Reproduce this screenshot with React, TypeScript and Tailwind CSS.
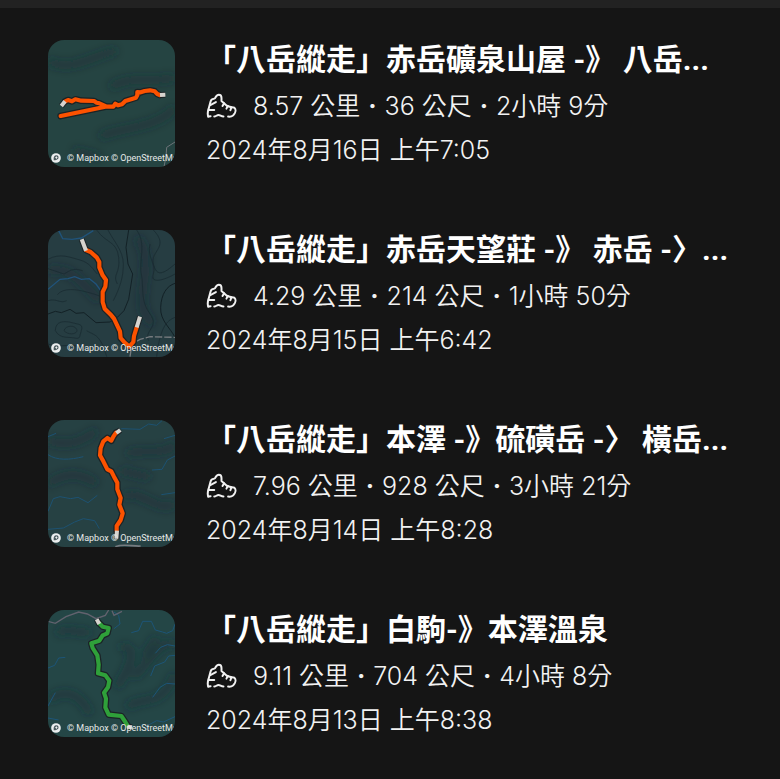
import { Fragment, type ReactNode } from "react";

type Activity = {
  id: string;
  title: string;
  stats: string[];
  date: string;
  map: ReactNode;
};

type TrackProps = { d: string; color: string; ends: string[] };

function Track({ d, color, ends }: TrackProps) {
  return (
    <g fill="none" strokeLinecap="round" strokeLinejoin="round">
      <path d={d} stroke="#1b2326" strokeWidth="20" />
      {ends.map((e) => (
        <path key={e} d={e} stroke="#1b2326" strokeWidth="18" strokeLinecap="butt" />
      ))}
      <path d={d} stroke={color} strokeWidth="12.5" />
      {ends.map((e) => (
        <path key={e} d={e} stroke="#d6d3ce" strokeWidth="12" strokeLinecap="butt" />
      ))}
    </g>
  );
}

type TerrainProps = { id: string; base: string; shades: string[]; children: ReactNode };

function Terrain({ id, base, shades, children }: TerrainProps) {
  return (
    <svg viewBox="24 28 381 381" className="block size-full" role="img" aria-label="路線地圖">
      <defs>
        <filter id={id} x="-30%" y="-30%" width="160%" height="160%">
          <feGaussianBlur stdDeviation="12" />
        </filter>
      </defs>
      <rect x="24" y="28" width="381" height="381" fill={base} />
      <g filter={`url(#${id})`} fill="none" stroke="#162b2f" strokeOpacity="0.4" strokeWidth="24">
        {shades.map((s) => (
          <path key={s} d={s} />
        ))}
      </g>
      {children}
    </svg>
  );
}

const activities: Activity[] = [
  {
    id: "a",
    title: "「八岳縱走」赤岳礦泉山屋 -》 八岳...",
    stats: ["8.57 公里", "36 公尺", "2小時 9分"],
    date: "2024年8月16日 上午7:05",
    map: (
      <Terrain
        id="shade-a"
        base="#254442"
        shades={[
          "M24 90C90 130 170 70 230 60",
          "M210 170C280 130 330 160 405 140",
          "M180 320C220 290 350 300 405 230",
          "M100 360L180 380",
        ]}
      >
        <path d="M405 334L380 350L378 378L372 408" fill="none" stroke="#6d7479" strokeWidth="3" />
        <Track
          color="#fc5200"
          d="M62 256L196 228M76 212L84 208L96 212L106 206L124 210L162 211L170 216L178 218L200 228L220 228L226 219L234 224L246 221L256 211L288 201L292 193L292 184L302 185L314 181L330 179L344 182L352 190L359 193"
          ends={["M64 226L75 212", "M360 193L376 192"]}
        />
      </Terrain>
    ),
  },
  {
    id: "b",
    title: "「八岳縱走」赤岳天望莊 -》 赤岳 -〉...",
    stats: ["4.29 公里", "214 公尺", "1小時 50分"],
    date: "2024年8月15日 上午6:42",
    map: (
      <Terrain
        id="shade-b"
        base="#263d42"
        shades={["M24 150C90 140 110 170 180 240", "M290 50C360 130 260 250 340 310"]}
      >
        <g fill="none" stroke="#1b2d32" strokeWidth="2.5">
          <path d="M24 116C60 96 90 110 120 118S160 148 172 160" />
          <path d="M24 144L72 160C88 152 96 140 128 150" />
          <path d="M52 222C70 200 110 206 140 214S174 224 186 230" />
          <path d="M24 240C50 232 60 250 80 240" />
          <path d="M46 330C46 300 74 300 96 306S130 310 124 330S120 356 104 352S60 356 46 330Z" />
          <path d="M72 330C76 314 104 312 110 326S86 346 72 330Z" />
          <path d="M24 370C60 384 80 366 130 380" />
          <path d="M170 28C200 70 230 60 236 110S216 160 232 190" />
          <path d="M204 28C220 60 250 90 250 130S240 200 220 240" />
          <path d="M290 28C320 70 296 120 304 160S300 240 330 280S310 330 326 360" />
          <path d="M340 28C390 80 330 90 340 130S370 160 405 130" />
          <path d="M405 160C370 180 330 190 340 160S320 110 330 70" />
          <path d="M405 290C380 300 360 320 350 408" />
          <path d="M140 330C160 344 180 336 200 408" />
        </g>
        <g fill="none" stroke="#132126" strokeWidth="3">
          <path d="M24 280L46 272L64 276L90 266L108 278L132 276L168 306L210 304L232 290L252 270L266 236L278 160L264 130L258 80L266 28" />
          <path d="M405 188C380 196 364 220 362 260S390 320 405 350" />
        </g>
        <g fill="none" stroke="#20537a" strokeWidth="4">
          <path d="M56 30L68 54L96 56L124 52L160 30" />
          <path d="M24 206L60 176L84 174L104 168L124 176L148 174L168 190L184 212" />
        </g>
        <path d="M270 408L276 370L300 356L330 348L405 350" fill="none" stroke="#767b7e" strokeWidth="4" strokeDasharray="22 6" />
        <Track
          color="#fc5200"
          d="M138 88L152 94L170 110L178 124L178 140L188 164L198 178L196 198L188 214L188 244L194 264L214 284L222 294L240 332L242 352L254 366L268 378L280 364L282 346L290 320"
          ends={["M125 56L138 90", "M290 320L300 288"]}
        />
      </Terrain>
    ),
  },
  {
    id: "c",
    title: "「八岳縱走」本澤 -》硫磺岳 -〉 橫岳...",
    stats: ["7.96 公里", "928 公尺", "3小時 21分"],
    date: "2024年8月14日 上午8:28",
    map: (
      <Terrain
        id="shade-c"
        base="#264143"
        shades={[
          "M24 90C90 110 130 90 170 60",
          "M24 220C80 180 130 190 170 220",
          "M260 130C310 110 370 140 405 100",
          "M250 260C300 230 350 310 405 280",
          "M240 180L330 200",
        ]}
      >
        <g fill="none" stroke="#1d5272" strokeWidth="3">
          <path d="M24 78L48 68" />
          <path d="M24 132C50 150 90 148 130 138" />
          <path d="M244 54L300 56L326 40L350 44L366 30" />
          <path d="M336 178L366 176L382 148L405 136" />
          <path d="M364 252L405 246M372 84L405 74" />
          <path d="M24 302L40 264L60 258L92 264L114 260L144 276L172 254" />
          <path d="M24 356L70 352L104 334L130 324L164 330L178 354" />
        </g>
        <path d="M226 408C250 398 280 408 302 406" fill="none" stroke="#777b80" strokeWidth="5" />
        <Track
          color="#fc5200"
          d="M228 66L220 78L214 90L202 82L190 92L182 112L180 134L190 152L202 176L214 182L222 198L232 216L232 236L242 262L238 282L248 308L242 328L230 346L230 360"
          ends={["M229 67L241 58", "M231 360L229 384"]}
        />
      </Terrain>
    ),
  },
  {
    id: "d",
    title: "「八岳縱走」白駒-》本澤溫泉",
    stats: ["9.11 公里", "704 公尺", "4小時 8分"],
    date: "2024年8月13日 上午8:38",
    map: (
      <Terrain
        id="shade-d"
        base="#244646"
        shades={[
          "M50 100C90 70 120 110 150 90",
          "M240 140C300 130 270 200 230 260",
          "M405 130C350 120 320 200 280 230",
          "M24 300C90 250 130 300 150 340",
          "M260 320C310 280 360 330 405 220",
          "M310 170L350 110",
        ]}
      >
        <g fill="none" stroke="#1d5578" strokeWidth="3">
          <path d="M274 96L296 90L308 62L334 62L346 88L368 94L380 98L398 90L405 70" />
          <path d="M346 158L362 140L382 132L405 136M332 226L344 196L374 184L386 166L405 164" />
          <path d="M338 290L360 260L380 248L405 250" />
          <path d="M24 202L44 194L56 172L76 170M24 316L46 276" />
          <path d="M24 352L56 358M320 376L350 360L370 364L405 348" />
          <path d="M222 84L240 70L236 44L222 34" />
        </g>
        <path d="M24 62L46 68L78 48L116 34L142 40L168 54L196 44L206 28M216 30L222 44L246 32" fill="none" stroke="#62626e" strokeWidth="4" />
        <Track
          color="#2fa03a"
          d="M178 68L188 78L206 82L202 98L188 104L178 120L154 128L158 142L172 164L176 192L174 218L196 224L208 240L204 260L192 276L198 294L196 320L206 342L244 346L256 364L266 380"
          ends={["M170 56L178 70", "M262 378L276 380"]}
        />
      </Terrain>
    ),
  },
];

function BootIcon() {
  return (
    <svg
      viewBox="20 20 94 78"
      className="h-[26px] w-[31px] shrink-0"
      fill="none"
      stroke="currentColor"
      strokeWidth="6"
      strokeLinecap="round"
      strokeLinejoin="round"
      aria-hidden="true"
    >
      <path d="M27 91C24 84 25 76 28 67L34 45C35 41 37 39 41 38L47 36C51 28 54 25 59 25C65 25 67 29 67 35V44L83 58C90 63 100 62 106 64C113 70 108 81 103 87C98 91 93 92 87 91" />
      <path d="M33 56L50 47M28 71H45" />
      <path d="M27 91L34 90M45 91C50 91 53 86 58 86C63 86 66 91 73 91" />
      <path d="M75 51L70 59M86 59L82 67M97 63L94 72" />
    </svg>
  );
}

function ActivityRow({ activity }: { activity: Activity }) {
  return (
    <li className="flex items-start gap-[31px]">
      <figure className="relative size-[127px] shrink-0 overflow-hidden rounded-2xl">
        {activity.map}
        <figcaption className="absolute inset-x-0 bottom-0 flex h-[18px] items-center gap-[6px] pl-[3px]">
          <svg viewBox="0 0 30 30" className="size-[10px] shrink-0" aria-hidden="true">
            <circle cx="15" cy="15" r="14.5" fill="#eceeef" />
            <path d="M8 22C7 12 10 7 16 7C22 7 24 12 22 16C19 21 13 22 8 22Z" fill="#4b5b5e" />
            <path d="M16 9L18 13L21 14L18 15L16 19L14 15L11 14L14 13Z" fill="#eceeef" />
          </svg>
          <span className="font-['Roboto','Liberation_Sans',sans-serif] text-[9px] leading-3 font-normal whitespace-nowrap text-[#e6e9e9]">
            © Mapbox © OpenStreetMa
          </span>
        </figcaption>
      </figure>
      <div className="min-w-0 flex-1 whitespace-nowrap">
        <h2 className="mb-1 truncate font-['Roboto','Noto_Sans_CJK_TC',sans-serif] text-[30px] leading-10 font-bold text-white">
          {activity.title}
        </h2>
        <p className="flex items-center gap-4 text-[25px] leading-[44px]">
          <BootIcon />
          <span>
            {activity.stats.map((s, i) => (
              <Fragment key={s}>
                {i > 0 && <span className="mx-0.5 font-bold"> · </span>}
                {s}
              </Fragment>
            ))}
          </span>
        </p>
        <p className="text-[25px] leading-[44px]">
          <time>{activity.date}</time>
        </p>
      </div>
    </li>
  );
}

export default function App() {
  return (
    <main className="min-h-screen overflow-hidden bg-[#151515] font-['Inter','Noto_Sans_CJK_TC',sans-serif] font-[350] text-[#f2f2f2]">
      <div className="h-2 bg-[#222222]" />
      <ul className="flex flex-col gap-[58px] pt-8 pr-6 pl-12">
        {activities.map((a) => (
          <ActivityRow key={a.id} activity={a} />
        ))}
      </ul>
    </main>
  );
}
